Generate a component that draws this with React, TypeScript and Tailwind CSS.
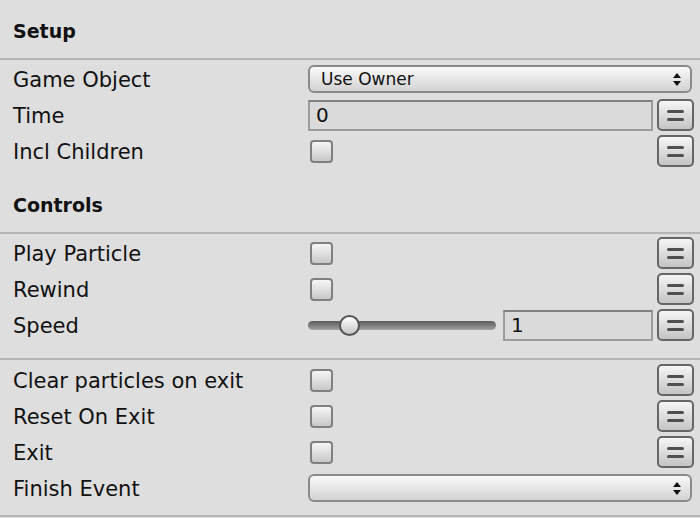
import React from "react";

const FONT = { fontFamily: '"DejaVu Sans", "Liberation Sans", sans-serif' };

function Sep() {
  return <div className="h-[2px] bg-[#b4b4b4]" />;
}

function Header({ title, pad }: { title: string; pad: string }) {
  return (
    <div className={`flex items-center pl-[13px] text-[19px] font-bold text-[#111] ${pad}`}>
      {title}
    </div>
  );
}

function EqButton() {
  return (
    <div className="flex h-[32px] w-[37px] shrink-0 flex-col items-center justify-center gap-[5px] rounded-[5px] border-2 border-[#666] bg-linear-to-b from-[#f6f6f6] to-[#c4c4c4]">
      <div className="h-[3px] w-[17px] rounded-full bg-[#505050]" />
      <div className="h-[3px] w-[17px] rounded-full bg-[#505050]" />
    </div>
  );
}

function Checkbox() {
  return (
    <div className="ml-[2px] h-[23px] w-[23px] rounded-[4px] border-2 border-[#808080] bg-linear-to-b from-[#f6f6f6] to-[#c8c8c8]" />
  );
}

function Arrows() {
  return (
    <svg width="8" height="13" viewBox="0 0 8 13">
      <path d="M4 0 L8 5 L0 5 Z" fill="#111" />
      <path d="M4 13 L8 8 L0 8 Z" fill="#111" />
    </svg>
  );
}

function Dropdown({ value }: { value: string }) {
  return (
    <div className="mr-[2px] flex h-[28px] flex-1 items-center justify-between rounded-[6px] border-2 border-[#8a8a8a] bg-linear-to-b from-[#fafafa] to-[#d2d2d2] pl-[11px] pr-[9px] text-[17px] text-[#111]">
      <span className="pt-[1px]">{value}</span>
      <Arrows />
    </div>
  );
}

function Field({ value, className }: { value: string; className?: string }) {
  return (
    <div
      className={`flex h-[31px] items-center border-2 border-[#9c9c9c] border-t-[#808080] bg-[#dadada] pl-[6px] text-[20px] text-[#111] ${className ?? ""}`}
    >
      {value}
    </div>
  );
}

function Row({ label, children }: { label: string; children: React.ReactNode }) {
  return (
    <div className="flex h-[36px] items-center">
      <div className="w-[308px] shrink-0 pl-[13px] pt-[3px] text-[21px] text-[#111]">{label}</div>
      <div className="flex flex-1 items-center gap-[4px] pr-[6px]">{children}</div>
    </div>
  );
}

function CheckRow({ label }: { label: string }) {
  return (
    <Row label={label}>
      <Checkbox />
      <div className="flex-1" />
      <EqButton />
    </Row>
  );
}

function Slider() {
  return (
    <div className="relative mr-[3px] flex h-[31px] w-[188px] shrink-0 items-center">
      <div className="h-[9px] w-full rounded-full bg-linear-to-b from-[#5c5c5c] to-[#a2a2a2]" />
      <div className="absolute left-[31px] top-[5px] h-[21px] w-[21px] rounded-full border-2 border-[#555] bg-linear-to-b from-[#ffffff] to-[#c6c6c6]" />
    </div>
  );
}

export default function App() {
  return (
    <div className="h-[518px] w-[700px] overflow-hidden bg-[#dedede]" style={FONT}>
      <Header title="Setup" pad="h-[58px] pt-[4px]" />
      <Sep />
      <div className="pt-[1px]">
        <Row label="Game Object">
          <Dropdown value="Use Owner" />
        </Row>
        <Row label="Time">
          <Field value="0" className="flex-1" />
          <EqButton />
        </Row>
        <CheckRow label="Incl Children" />
      </div>
      <Header title="Controls" pad="h-[63px] pt-[9px]" />
      <Sep />
      <div className="pt-[1px]">
        <CheckRow label="Play Particle" />
        <CheckRow label="Rewind" />
        <Row label="Speed">
          <Slider />
          <Field value="1" className="flex-1" />
          <EqButton />
        </Row>
      </div>
      <div className="h-[15px]" />
      <Sep />
      <div className="pt-[2px]">
        <CheckRow label="Clear particles on exit" />
        <CheckRow label="Reset On Exit" />
        <CheckRow label="Exit" />
        <Row label="Finish Event">
          <Dropdown value="" />
        </Row>
      </div>
      <div className="h-[9px]" />
      <Sep />
    </div>
  );
}
